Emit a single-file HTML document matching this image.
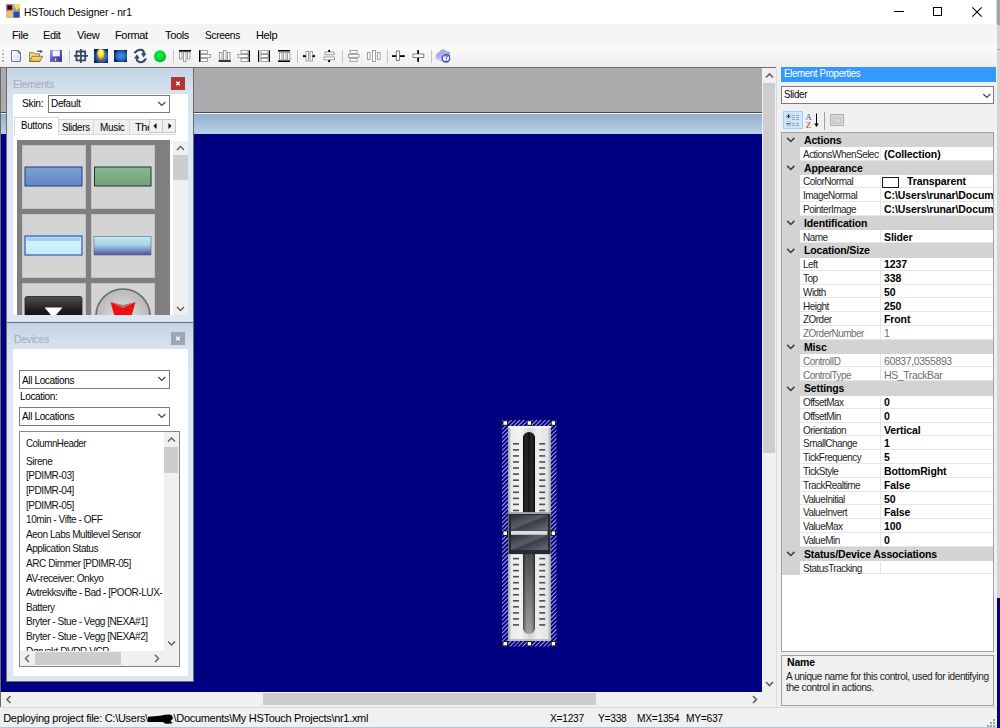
<!DOCTYPE html>
<html><head><meta charset="utf-8">
<style>
*{margin:0;padding:0;box-sizing:border-box}
html,body{width:1000px;height:728px;overflow:hidden;background:#f0f0f0;font-family:"Liberation Sans",sans-serif;font-size:11px;color:#000}
.a{position:absolute}
.t{position:absolute;white-space:nowrap;line-height:1.117}
svg{position:absolute;overflow:visible}
</style></head><body>
<div class="a" style="left:0px;top:0px;width:1000px;height:24px;background:#fff"></div>
<svg style="left:6px;top:4px" width="14" height="14" viewBox="0 0 14 14">
<rect x="0" y="0" width="14" height="14" fill="#b8b8b8"/>
<rect x="0.5" y="0.5" width="6" height="6" fill="#d04040"/><rect x="1.5" y="1.5" width="4.5" height="4" fill="#111"/>
<rect x="7.5" y="0.5" width="6" height="6" fill="#f0e050"/><path d="M7.5 0.5 L10 6.5 L7.5 6.5Z" fill="#7080ff"/><path d="M10 0.5 L13.5 0.5 L13.5 3 Z" fill="#f6f070"/><path d="M13.5 4 L13.5 6.5 L10 6.5Z" fill="#e06050"/>
<rect x="0.5" y="7.5" width="6" height="6" fill="#f0c070"/>
<rect x="7.5" y="7.5" width="6" height="6" fill="#2050a8"/>
</svg>
<div class="t" style="left:24.3px;top:6.06px;font-size:11.2px;transform:scaleX(0.92);transform-origin:0 0;letter-spacing:-0.1px;color:#000">HSTouch Designer - nr1</div>
<div class="a" style="left:894px;top:11px;width:10px;height:1px;background:#000"></div>
<div class="a" style="left:933px;top:7px;width:9px;height:9px;border:1px solid #000"></div>
<svg style="left:972px;top:7px" width="10" height="10" viewBox="0 0 10 10"><path d="M0.3 0.3L9.7 9.7M9.7 0.3L0.3 9.7" stroke="#000" stroke-width="1.1"/></svg>
<div class="a" style="left:997px;top:0px;width:3px;height:25px;background:#a4a4a4"></div>
<div class="a" style="left:997px;top:25px;width:3px;height:573px;background:#d4d4d4"></div>
<div class="a" style="left:997px;top:49px;width:3px;height:1px;background:#a8a8a8"></div>
<div class="a" style="left:997px;top:598px;width:3px;height:130px;background:#000080"></div>
<div class="a" style="left:996px;top:0px;width:1px;height:728px;background:#c4d6e8"></div>
<div class="a" style="left:0px;top:24px;width:997px;height:21px;background:#f5f5f5"></div>
<div class="t" style="left:12px;top:28.65px;font-size:11px;letter-spacing:-0.35px">File</div>
<div class="t" style="left:43px;top:28.65px;font-size:11px;letter-spacing:-0.35px">Edit</div>
<div class="t" style="left:77px;top:28.65px;font-size:11px;letter-spacing:-0.35px">View</div>
<div class="t" style="left:115px;top:28.65px;font-size:11px;letter-spacing:-0.35px">Format</div>
<div class="t" style="left:165px;top:28.65px;font-size:11px;letter-spacing:-0.35px">Tools</div>
<div class="t" style="left:205px;top:28.65px;font-size:11px;transform:scaleX(0.92);transform-origin:0 0;letter-spacing:-0.35px">Screens</div>
<div class="t" style="left:256px;top:28.65px;font-size:11px;letter-spacing:-0.35px">Help</div>
<div class="a" style="left:0px;top:45px;width:997px;height:22px;background:linear-gradient(#fbfbfb,#efefef)"></div>
<div class="a" style="left:2px;top:49.5px;width:2px;height:1.5px;background:#b4b4b4"></div>
<div class="a" style="left:2px;top:53px;width:2px;height:1.5px;background:#b4b4b4"></div>
<div class="a" style="left:2px;top:56.5px;width:2px;height:1.5px;background:#b4b4b4"></div>
<div class="a" style="left:2px;top:60px;width:2px;height:1.5px;background:#b4b4b4"></div>
<svg style="left:0;top:0" width="460" height="70" viewBox="0 0 460 70">
<defs>
<linearGradient id="gpage" x1="0" y1="0" x2="1" y2="1"><stop offset="0" stop-color="#fff"/><stop offset="1" stop-color="#cfd8ea"/></linearGradient>
<linearGradient id="gfold" x1="0" y1="0" x2="0" y2="1"><stop offset="0" stop-color="#f8e39a"/><stop offset="1" stop-color="#e6b43c"/></linearGradient>
<linearGradient id="gsave" x1="0" y1="0" x2="1" y2="1"><stop offset="0" stop-color="#9a9af0"/><stop offset="0.5" stop-color="#5a5ad0"/><stop offset="1" stop-color="#2a2a98"/></linearGradient>
<radialGradient id="gbulb" cx="0.5" cy="0.3" r="0.6"><stop offset="0" stop-color="#fff8e0"/><stop offset="0.35" stop-color="#fff040"/><stop offset="0.75" stop-color="#f0b020"/><stop offset="1" stop-color="#b06010"/></radialGradient>
<radialGradient id="gsq" cx="0.55" cy="0.5" r="0.6"><stop offset="0" stop-color="#4a94dc"/><stop offset="0.6" stop-color="#2a68b8"/><stop offset="1" stop-color="#061e60"/></radialGradient>
<linearGradient id="gblue" x1="0" y1="0" x2="1" y2="1"><stop offset="0" stop-color="#1a4c9c"/><stop offset="0.5" stop-color="#4c94d8"/><stop offset="1" stop-color="#1a4c9c"/></linearGradient>
<radialGradient id="ggreen" cx="0.45" cy="0.4" r="0.6"><stop offset="0" stop-color="#10f040"/><stop offset="0.8" stop-color="#00d030"/><stop offset="1" stop-color="#00a020"/></radialGradient>
<linearGradient id="gbook" x1="0" y1="0" x2="1" y2="1"><stop offset="0" stop-color="#9c9ce4"/><stop offset="0.5" stop-color="#b4b4f0"/><stop offset="1" stop-color="#7070c8"/></linearGradient>
</defs>
<!-- new doc -->
<path d="M11.5 50.5 H17.8 L20.5 53.2 V61.5 H11.5 Z" fill="url(#gpage)" stroke="#6a7a98" stroke-width="1"/>
<path d="M17.5 50.5 L20.5 53.5" stroke="#40506a" stroke-width="1.2"/>
<!-- open folder -->
<path d="M29.5 52.5 H33.5 L34.5 53.8 H39.5 V61.5 H29.5 Z" fill="#f0d880" stroke="#8a7030" stroke-width="0.8"/>
<path d="M29.8 61.5 L32.3 56.3 H42.7 L39.8 61.5 Z" fill="url(#gfold)" stroke="#7a5a18" stroke-width="0.8"/>
<path d="M37.2 51.2 H40.5" stroke="#34507a" stroke-width="1.3"/><path d="M40.3 49.8 L43 51.6 L40.3 53.2Z" fill="#34507a"/>
<!-- save -->
<rect x="50" y="50" width="12" height="11.8" fill="url(#gsave)"/>
<rect x="52.6" y="50.5" width="7.2" height="5.8" fill="#f2f4ff"/>
<rect x="54" y="57.8" width="4.8" height="3.7" fill="#50506a"/><rect x="54.8" y="58.5" width="1.4" height="2.5" fill="#d8d8e8"/>
<!-- separator -->
<rect x="69" y="50" width="1" height="13" fill="#c4c4c4"/>
<!-- grid -->
<path d="M76.5 51.5 H85.2 V60.3 H76.5 Z M80.85 49 V63 M74 55.9 H88" stroke="#33476a" stroke-width="1.8" fill="none"/>
<!-- bulb -->
<rect x="94" y="49" width="14" height="14" fill="url(#gsq)"/>
<path d="M100.8 49 C104.5 49.3 105 52.5 104.5 55 C104 57.3 102.5 58.5 102 61 H99.6 C99.2 58.5 97.7 57.3 97.2 55 C96.7 52.5 97.2 49.3 100.8 49Z" fill="url(#gbulb)"/>
<rect x="99.8" y="60.5" width="2" height="2.2" fill="#6a5020"/>
<!-- blue square -->
<rect x="114" y="50" width="13" height="12" fill="url(#gsq)"/>
<!-- refresh -->
<path d="M134.5 53.2 Q137 49.6 141 49.8 Q144 50.2 143.9 53.8" fill="none" stroke="#34486a" stroke-width="2.1"/>
<path d="M141 53.2 L146.5 53.2 L143.6 57.5Z" fill="#34486a"/>
<path d="M146 58.5 Q144 62.4 140 62.2 Q136.5 61.8 136.8 58.2" fill="none" stroke="#34486a" stroke-width="2.1"/>
<path d="M134.1 58.6 L139.7 58.6 L136.9 54.2Z" fill="#34486a"/>
<!-- green -->
<circle cx="160" cy="56.3" r="6" fill="url(#ggreen)"/>
<rect x="173" y="50" width="1" height="13" fill="#c4c4c4"/>
<g fill="#fff" stroke="#8a8a8a" stroke-width="0.8">
<!-- align top -->
<rect x="179.5" y="52" width="2.5" height="7"/><rect x="183.5" y="52" width="2.5" height="9.5"/><rect x="187.5" y="52" width="2.5" height="7"/>
<!-- align left -->
<rect x="200.5" y="50.5" width="7" height="2.8"/><rect x="200.5" y="54.5" width="10" height="3"/><rect x="200.5" y="58.5" width="7" height="3"/>
<!-- align bottom -->
<rect x="219.5" y="52.5" width="2.5" height="7.5"/><rect x="223.5" y="50.5" width="2.5" height="9.5"/><rect x="227.5" y="52.5" width="2.5" height="7.5"/>
<!-- align right -->
<rect x="241" y="50.5" width="7" height="2.8"/><rect x="238" y="54.5" width="10" height="3"/><rect x="241" y="58.5" width="7" height="3"/>
<!-- same width -->
<rect x="261" y="50.5" width="7" height="2.8"/><rect x="261" y="54.5" width="7" height="3"/><rect x="261" y="58.5" width="7" height="3"/>
<!-- same height -->
<rect x="279.5" y="52.5" width="2.5" height="7.5"/><rect x="283.5" y="52.5" width="2.5" height="7.5"/><rect x="287.5" y="52.5" width="2.5" height="7.5"/>
</g>
<g fill="#000">
<rect x="179" y="50" width="12" height="1.6"/>
<rect x="199" y="50.3" width="1.3" height="11.7"/>
<rect x="218.6" y="60.3" width="12.2" height="1.5"/>
<rect x="248.7" y="50.3" width="1.3" height="11.7"/>
<rect x="258" y="50.3" width="1.2" height="11.7"/><rect x="268.8" y="50.3" width="1.2" height="11.7"/>
<rect x="278" y="50" width="12" height="1.5"/><rect x="278" y="60.5" width="12" height="1.5"/>
</g>
<rect x="297" y="50" width="1" height="13" fill="#c4c4c4"/>
<!-- hspace -->
<g fill="#fff" stroke="#8a8a8a" stroke-width="0.8"><rect x="306" y="51.5" width="2.5" height="9.5"/><rect x="310" y="51.5" width="2.5" height="9.5"/>
<rect x="325" y="52" width="9" height="2.8"/><rect x="324" y="57" width="10.5" height="2.8"/>
<rect x="350" y="50.5" width="7" height="3"/><rect x="348.5" y="54.3" width="10.5" height="3"/><rect x="350" y="58.3" width="7" height="3"/>
<rect x="367.5" y="52.5" width="2.5" height="7"/><rect x="372.5" y="50.5" width="3" height="11"/><rect x="377.5" y="52.5" width="2.5" height="7"/>
</g>
<g fill="#000"><rect x="303" y="55.5" width="3" height="1.5"/><rect x="312.5" y="55.5" width="2.5" height="1.5"/><circle cx="304" cy="56.2" r="1.1"/><circle cx="314" cy="56.2" r="1.1"/>
<rect x="328.5" y="50" width="1.5" height="2"/><rect x="328.5" y="60" width="1.5" height="2"/><circle cx="329.2" cy="50.7" r="1"/><circle cx="329.2" cy="61.3" r="1"/>
</g>
<rect x="342" y="50" width="1" height="13" fill="#c4c4c4"/>
<rect x="387" y="50" width="1" height="13" fill="#c4c4c4"/>
<!-- center h -->
<rect x="392" y="55.2" width="12.8" height="1.8" fill="#000"/>
<rect x="396.3" y="51" width="3.2" height="9.5" fill="#fff" stroke="#666" stroke-width="0.8"/>
<rect x="417.2" y="50.2" width="1.8" height="11.6" fill="#000"/>
<rect x="413" y="54" width="10.8" height="3.5" fill="#fff" stroke="#666" stroke-width="0.8"/>
<rect x="431" y="50" width="1" height="13" fill="#c4c4c4"/>
<!-- help book -->
<path d="M436 54.5 L442.5 49 L450 52.3 L450 57 L444 62 L436 59 Z" fill="url(#gbook)"/>
<path d="M437 57.8 L442.5 60" stroke="#e0e0ff" stroke-width="0.9"/>
<circle cx="446" cy="58.3" r="3.7" fill="#f4f8ff" stroke="#2850d0" stroke-width="1.3"/>
<path d="M444.8 56.8 Q445.2 55.4 446.4 55.5 Q447.6 55.8 447.2 57 Q446.4 57.8 446.2 59" fill="none" stroke="#404070" stroke-width="1"/><rect x="445.7" y="60" width="1" height="1" fill="#404070"/>
</svg>
<div class="a" style="left:0px;top:67px;width:778px;height:1px;background:#6a6a6a"></div>
<div class="a" style="left:0px;top:68px;width:762px;height:44px;background:#ababab"></div>
<div class="a" style="left:0px;top:112px;width:762px;height:1px;background:#4a4a4a"></div>
<div class="a" style="left:0px;top:113px;width:762px;height:1px;background:#f4f8fc"></div>
<div class="a" style="left:0px;top:114px;width:762px;height:20px;background:linear-gradient(#93afce,#b9d1e9)"></div>
<div class="a" style="left:0px;top:134px;width:762px;height:558px;background:#000080"></div>
<div class="a" style="left:0px;top:67px;width:1px;height:640px;background:#6a6a6a"></div>
<div class="a" style="left:762px;top:68px;width:15px;height:639px;background:#f0f0f0"></div>
<div class="a" style="left:763px;top:83px;width:12px;height:370px;background:#cdcdcd"></div>
<svg style="left:762px;top:68px" width="15" height="15"><path d="M4 9.5 L7.5 6 L11 9.5" fill="none" stroke="#606060" stroke-width="1.6"/></svg>
<svg style="left:762px;top:676px" width="15" height="15"><path d="M4 6 L7.5 9.5 L11 6" fill="none" stroke="#606060" stroke-width="1.6"/></svg>
<div class="a" style="left:1px;top:692px;width:761px;height:15px;background:#f0f0f0"></div>
<div class="a" style="left:263px;top:693px;width:333px;height:12px;background:#cdcdcd"></div>
<svg style="left:1px;top:692px" width="15" height="15"><path d="M9.5 4 L6 7.5 L9.5 11" fill="none" stroke="#606060" stroke-width="1.6"/></svg>
<svg style="left:747px;top:692px" width="15" height="15"><path d="M6 4 L9.5 7.5 L6 11" fill="none" stroke="#606060" stroke-width="1.6"/></svg>
<div class="a" style="left:776px;top:67px;width:1px;height:640px;background:#dcdcdc"></div>
<svg style="left:500px;top:418px" width="60" height="232" viewBox="0 0 60 232">
<defs>
<pattern id="hatch" width="3" height="3" patternUnits="userSpaceOnUse" patternTransform="rotate(45)"><rect width="3" height="3" fill="#000080"/><rect x="0" y="0" width="0.9" height="3" fill="#b8b8ec"/></pattern>
<linearGradient id="silver" x1="0" y1="0" x2="1" y2="0"><stop offset="0" stop-color="#9aa0a6"/><stop offset="0.08" stop-color="#e8eaec"/><stop offset="0.3" stop-color="#f2f3f4"/><stop offset="0.5" stop-color="#d4d6d8"/><stop offset="0.7" stop-color="#eceeef"/><stop offset="0.92" stop-color="#e2e4e6"/><stop offset="1" stop-color="#9ca2a8"/></linearGradient>
<linearGradient id="trk" x1="0" y1="0" x2="0" y2="1"><stop offset="0" stop-color="#000"/><stop offset="0.4" stop-color="#0a0a0a"/><stop offset="0.6" stop-color="#383838"/><stop offset="1" stop-color="#9a9a9a"/></linearGradient>
<linearGradient id="trkh" x1="0" y1="0" x2="1" y2="0"><stop offset="0" stop-color="#000" stop-opacity="0.5"/><stop offset="0.5" stop-color="#fff" stop-opacity="0.05"/><stop offset="1" stop-color="#000" stop-opacity="0.5"/></linearGradient>
<linearGradient id="thumb" x1="0" y1="0" x2="1" y2="1"><stop offset="0" stop-color="#2a2e38"/><stop offset="0.45" stop-color="#5a5e68"/><stop offset="0.55" stop-color="#3a3e48"/><stop offset="1" stop-color="#6a6e78"/></linearGradient>
</defs>
<rect x="2" y="2" width="54.5" height="226.5" fill="url(#hatch)"/>
<rect x="8" y="8" width="43" height="215" fill="url(#silver)"/>
<rect x="8" y="8" width="43" height="2" fill="#f8f8f8" opacity="0.8"/>
<rect x="8" y="221" width="43" height="2" fill="#b0b4b8" opacity="0.8"/>
<rect x="23" y="14" width="12" height="202" rx="6" ry="6" fill="url(#trk)"/>
<rect x="23" y="14" width="12" height="202" rx="6" ry="6" fill="url(#trkh)"/>
<g fill="#4e4e4e"><rect x="13" y="25.00" width="6" height="1.6"/><rect x="39.2" y="25.00" width="6" height="1.6"/><rect x="13" y="31.06" width="6" height="1.6"/><rect x="39.2" y="31.06" width="6" height="1.6"/><rect x="13" y="37.12" width="6" height="1.6"/><rect x="39.2" y="37.12" width="6" height="1.6"/><rect x="13" y="43.18" width="6" height="1.6"/><rect x="39.2" y="43.18" width="6" height="1.6"/><rect x="13" y="49.24" width="6" height="1.6"/><rect x="39.2" y="49.24" width="6" height="1.6"/><rect x="13" y="55.30" width="6" height="1.6"/><rect x="39.2" y="55.30" width="6" height="1.6"/><rect x="13" y="61.36" width="6" height="1.6"/><rect x="39.2" y="61.36" width="6" height="1.6"/><rect x="13" y="67.42" width="6" height="1.6"/><rect x="39.2" y="67.42" width="6" height="1.6"/><rect x="13" y="73.48" width="6" height="1.6"/><rect x="39.2" y="73.48" width="6" height="1.6"/><rect x="13" y="79.54" width="6" height="1.6"/><rect x="39.2" y="79.54" width="6" height="1.6"/><rect x="13" y="85.60" width="6" height="1.6"/><rect x="39.2" y="85.60" width="6" height="1.6"/><rect x="13" y="91.66" width="6" height="1.6"/><rect x="39.2" y="91.66" width="6" height="1.6"/><rect x="13" y="139.80" width="6" height="1.6"/><rect x="39.2" y="139.80" width="6" height="1.6"/><rect x="13" y="145.83" width="6" height="1.6"/><rect x="39.2" y="145.83" width="6" height="1.6"/><rect x="13" y="151.86" width="6" height="1.6"/><rect x="39.2" y="151.86" width="6" height="1.6"/><rect x="13" y="157.89" width="6" height="1.6"/><rect x="39.2" y="157.89" width="6" height="1.6"/><rect x="13" y="163.92" width="6" height="1.6"/><rect x="39.2" y="163.92" width="6" height="1.6"/><rect x="13" y="169.95" width="6" height="1.6"/><rect x="39.2" y="169.95" width="6" height="1.6"/><rect x="13" y="175.98" width="6" height="1.6"/><rect x="39.2" y="175.98" width="6" height="1.6"/><rect x="13" y="182.01" width="6" height="1.6"/><rect x="39.2" y="182.01" width="6" height="1.6"/><rect x="13" y="188.04" width="6" height="1.6"/><rect x="39.2" y="188.04" width="6" height="1.6"/><rect x="13" y="194.07" width="6" height="1.6"/><rect x="39.2" y="194.07" width="6" height="1.6"/><rect x="13" y="200.10" width="6" height="1.6"/><rect x="39.2" y="200.10" width="6" height="1.6"/><rect x="13" y="206.13" width="6" height="1.6"/><rect x="39.2" y="206.13" width="6" height="1.6"/></g>
<rect x="8.5" y="94.3" width="42" height="41.8" fill="#262a34"/>
<rect x="11" y="97" width="37" height="15" fill="url(#thumb)"/>
<rect x="11" y="117" width="37" height="15" fill="url(#thumb)"/>
<rect x="11" y="112.8" width="36.5" height="4" fill="#dcdcdc"/>
<rect x="8.5" y="94.3" width="42" height="1.5" fill="#c8c8cc"/>
<g fill="#fff" stroke="#000" stroke-width="0.8">
<rect x="3" y="2.8" width="4.4" height="4.4"/><rect x="27.2" y="2.8" width="4.4" height="4.4"/><rect x="51.2" y="2.8" width="4.4" height="4.4"/>
<rect x="3" y="113" width="4.4" height="4.4"/><rect x="51.2" y="113" width="4.4" height="4.4"/>
<rect x="3" y="223.5" width="4.4" height="4.4"/><rect x="27.2" y="223.5" width="4.4" height="4.4"/><rect x="51.2" y="223.5" width="4.4" height="4.4"/>
</g>
</svg>
<div class="a" style="left:6px;top:67px;width:188px;height:256px;background:linear-gradient(#c4d4e4 0px,#d6e2ee 24px,#dce7f2 60px);border:1px solid #6e6e6e"></div>
<div class="t" style="left:13px;top:77.84px;font-size:11px;transform:scaleX(0.93);transform-origin:0 0;color:#a3abb4;letter-spacing:-0.2px">Elements</div>
<div class="a" style="left:171px;top:77px;width:14px;height:13px;background:#b23434"></div>
<svg style="left:171px;top:77px" width="14" height="13"><path d="M5.2 4.7 L8.8 8.3 M8.8 4.7 L5.2 8.3" stroke="#fff" stroke-width="1.3"/></svg>
<div class="a" style="left:13px;top:94px;width:175px;height:221px;background:#fff"></div>
<div class="t" style="left:22px;top:97.05px;font-size:11px;transform:scaleX(0.93);transform-origin:0 0;letter-spacing:-0.3px">Skin:</div>
<div class="a" style="left:48px;top:95px;width:122px;height:18px;background:#fff;border:1px solid #7a7a7a"></div>
<div class="t" style="left:51.2px;top:97.05px;font-size:11px;transform:scaleX(0.9);transform-origin:0 0;letter-spacing:-0.3px">Default</div>
<svg style="left:156px;top:99px" width="12" height="10"><path d="M2.3 3 L5.8 6.5 L9.3 3" fill="none" stroke="#444" stroke-width="1.2"/></svg>
<div class="a" style="left:58px;top:119px;width:36px;height:16px;background:#f0f0f0;border:1px solid #d9d9d9;border-bottom:none"></div>
<div class="a" style="left:93px;top:119px;width:37px;height:16px;background:#f0f0f0;border:1px solid #d9d9d9;border-bottom:none"></div>
<div class="a" style="left:129px;top:119px;width:22px;height:16px;background:#f0f0f0;border:1px solid #d9d9d9;border-bottom:none"></div>
<div class="a" style="left:14px;top:134px;width:162px;height:1px;background:#d9d9d9"></div>
<div class="a" style="left:14px;top:117px;width:45px;height:19px;background:#fff;border:1px solid #d9d9d9;border-bottom:none"></div>
<div class="t" style="left:21px;top:119.35px;font-size:11px;transform:scaleX(0.88);transform-origin:0 0;letter-spacing:-0.3px">Buttons</div>
<div class="t" style="left:62px;top:120.85px;font-size:11px;transform:scaleX(0.88);transform-origin:0 0;letter-spacing:-0.3px">Sliders</div>
<div class="t" style="left:99.5px;top:120.85px;font-size:11px;transform:scaleX(0.9);transform-origin:0 0;letter-spacing:-0.3px">Music</div>
<div class="a" style="left:130px;top:119px;width:19px;height:15px;overflow:hidden"><div class="t" style="left:5px;top:1.5px;font-size:11px;letter-spacing:-0.45px">Theme</div></div>
<div class="a" style="left:149px;top:119px;width:14px;height:14px;background:#f0f0f0;border:1px solid #c8c8c8"></div>
<div class="a" style="left:162px;top:119px;width:14px;height:14px;background:#f0f0f0;border:1px solid #c8c8c8"></div>
<svg style="left:149px;top:119px" width="28" height="14"><path d="M7.5 4 L4.5 7 L7.5 10Z M19.5 4 L22.5 7 L19.5 10Z" fill="#000"/></svg>
<div class="a" style="left:17px;top:140px;width:153px;height:175px;background:#7f7f7f;overflow:hidden">
<div class="a" style="left:5px;top:5px;width:64px;height:64px;background:#d4d4d4;border:1px solid #c4c4c4"></div>
<div class="a" style="left:74px;top:5px;width:64px;height:64px;background:#d4d4d4;border:1px solid #c4c4c4"></div>
<div class="a" style="left:5px;top:74px;width:64px;height:64px;background:#d4d4d4;border:1px solid #c4c4c4"></div>
<div class="a" style="left:74px;top:74px;width:64px;height:64px;background:#d4d4d4;border:1px solid #c4c4c4"></div>
<div class="a" style="left:5px;top:143px;width:64px;height:64px;background:#d4d4d4;border:1px solid #c4c4c4"></div>
<div class="a" style="left:74px;top:143px;width:64px;height:64px;background:#d4d4d4;border:1px solid #c4c4c4"></div>
</div>
<svg style="left:17px;top:140px;overflow:hidden" width="153" height="175" viewBox="17 140 153 175">
<defs>
<linearGradient id="b1" x1="0" y1="0" x2="0" y2="1"><stop offset="0" stop-color="#7aa2d4"/><stop offset="1" stop-color="#6088c0"/></linearGradient>
<linearGradient id="b2" x1="0" y1="0" x2="0" y2="1"><stop offset="0" stop-color="#88b894"/><stop offset="1" stop-color="#70a07c"/></linearGradient>
<linearGradient id="b3" x1="0" y1="0" x2="0" y2="1"><stop offset="0" stop-color="#a8d8f4"/><stop offset="0.3" stop-color="#d0f2fc"/><stop offset="1" stop-color="#c4ecfa"/></linearGradient>
<linearGradient id="b4" x1="0" y1="0" x2="0" y2="1"><stop offset="0" stop-color="#bcecf0"/><stop offset="0.45" stop-color="#a8d4ea"/><stop offset="1" stop-color="#4c50a0"/></linearGradient>
<linearGradient id="b5" x1="0" y1="0" x2="0" y2="1"><stop offset="0" stop-color="#505050"/><stop offset="0.5" stop-color="#1a1a1a"/><stop offset="1" stop-color="#000"/></linearGradient>
<radialGradient id="b6" cx="0.5" cy="0.5" r="0.5"><stop offset="0" stop-color="#e4e4e4"/><stop offset="1" stop-color="#b8b8b8"/></radialGradient>
</defs>
<rect x="25" y="167" width="57" height="19" fill="url(#b1)" stroke="#1a3a8e" stroke-width="1"/>
<rect x="94.5" y="167" width="56.5" height="19" fill="url(#b2)" stroke="#1c3a28" stroke-width="1"/>
<rect x="25" y="236" width="57" height="19" fill="url(#b3)" stroke="#2a58bc" stroke-width="1.2"/>
<rect x="27" y="238" width="53" height="3" fill="#8ec0e8" opacity="0.6"/>
<rect x="94" y="236.5" width="57" height="18.5" fill="url(#b4)" stroke="#6a5a90" stroke-width="0.6"/>
<rect x="25" y="296.5" width="57" height="30" rx="2" fill="url(#b5)" stroke="#222" stroke-width="0.8"/>
<path d="M44.5 307.5 L62.5 307.5 L53.5 318Z" fill="#fff"/>
<circle cx="123" cy="316" r="27" fill="url(#b6)" stroke="#6a6a6a" stroke-width="1.6"/>
<path d="M110.5 302 L123 308 L135.5 302 L131 318 L115 318Z" fill="#ee1010"/><path d="M110.5 302 L123 308 L135.5 302 L123 305Z" fill="#a01010" opacity="0.5"/>
</svg>
<div class="a" style="left:173px;top:141px;width:15px;height:174px;background:#f0f0f0"></div>
<div class="a" style="left:173px;top:155px;width:15px;height:25px;background:#cdcdcd"></div>
<svg style="left:173px;top:141px" width="15" height="15"><path d="M4 9 L7.5 5.5 L11 9" fill="none" stroke="#606060" stroke-width="1.4"/></svg>
<svg style="left:173px;top:301px" width="15" height="15"><path d="M4 6 L7.5 9.5 L11 6" fill="none" stroke="#606060" stroke-width="1.4"/></svg>
<div class="a" style="left:6px;top:322px;width:188px;height:360px;background:linear-gradient(#c4d4e4 0px,#d6e2ee 24px,#dce7f2 60px);border:1px solid #6e6e6e"></div>
<div class="t" style="left:13.5px;top:332.65px;font-size:11px;transform:scaleX(0.93);transform-origin:0 0;color:#a3abb4;letter-spacing:-0.2px">Devices</div>
<div class="a" style="left:171px;top:332px;width:14px;height:13px;background:#9ca7b2"></div>
<svg style="left:171px;top:332px" width="14" height="13"><path d="M5.2 4.7 L8.8 8.3 M8.8 4.7 L5.2 8.3" stroke="#fff" stroke-width="1.3"/></svg>
<div class="a" style="left:13px;top:349px;width:175px;height:327px;background:#fff"></div>
<div class="a" style="left:19px;top:370px;width:151px;height:19px;background:#fff;border:1px solid #7a7a7a"></div>
<div class="t" style="left:21.5px;top:373.65px;font-size:11px;transform:scaleX(0.91);transform-origin:0 0;letter-spacing:-0.4px">All Locations</div>
<svg style="left:156px;top:374px" width="12" height="10"><path d="M2.3 3 L5.8 6.5 L9.3 3" fill="none" stroke="#444" stroke-width="1.2"/></svg>
<div class="t" style="left:19.5px;top:390.44px;font-size:11px;transform:scaleX(0.91);transform-origin:0 0;letter-spacing:-0.4px">Location:</div>
<div class="a" style="left:19px;top:407px;width:151px;height:19px;background:#fff;border:1px solid #7a7a7a"></div>
<div class="t" style="left:21.5px;top:410.35px;font-size:11px;transform:scaleX(0.91);transform-origin:0 0;letter-spacing:-0.4px">All Locations</div>
<svg style="left:156px;top:411px" width="12" height="10"><path d="M2.3 3 L5.8 6.5 L9.3 3" fill="none" stroke="#444" stroke-width="1.2"/></svg>
<div class="a" style="left:19px;top:431px;width:161px;height:236px;background:#fff;border:1px solid #828790"></div>
<div class="a" style="left:20px;top:432px;width:144px;height:219px;overflow:hidden">
<div class="t" style="left:6.00px;top:5.70px;font-size:10.5px;letter-spacing:-0.5px;color:#111;transform:scaleX(0.93);transform-origin:0 0">ColumnHeader</div>
<div class="t" style="left:6.00px;top:23.80px;font-size:10.5px;letter-spacing:-0.5px;color:#111;transform:scaleX(0.96);transform-origin:0 0">Sirene</div>
<div class="t" style="left:6.00px;top:38.40px;font-size:10.5px;letter-spacing:-0.5px;color:#111;transform:scaleX(0.96);transform-origin:0 0">[PDIMR-03]</div>
<div class="t" style="left:6.00px;top:53.00px;font-size:10.5px;letter-spacing:-0.5px;color:#111;transform:scaleX(0.96);transform-origin:0 0">[PDIMR-04]</div>
<div class="t" style="left:6.00px;top:67.60px;font-size:10.5px;letter-spacing:-0.5px;color:#111;transform:scaleX(0.96);transform-origin:0 0">[PDIMR-05]</div>
<div class="t" style="left:6.00px;top:82.20px;font-size:10.5px;letter-spacing:-0.5px;color:#111;transform:scaleX(0.96);transform-origin:0 0">10min - Vifte - OFF</div>
<div class="t" style="left:6.00px;top:96.80px;font-size:10.5px;letter-spacing:-0.5px;color:#111;transform:scaleX(0.96);transform-origin:0 0">Aeon Labs Multilevel Sensor</div>
<div class="t" style="left:6.00px;top:111.40px;font-size:10.5px;letter-spacing:-0.5px;color:#111;transform:scaleX(0.96);transform-origin:0 0">Application Status</div>
<div class="t" style="left:6.00px;top:126.00px;font-size:10.5px;letter-spacing:-0.5px;color:#111;transform:scaleX(0.96);transform-origin:0 0">ARC Dimmer [PDIMR-05]</div>
<div class="t" style="left:6.00px;top:140.60px;font-size:10.5px;letter-spacing:-0.5px;color:#111;transform:scaleX(0.96);transform-origin:0 0">AV-receiver: Onkyo</div>
<div class="t" style="left:6.00px;top:155.20px;font-size:10.5px;letter-spacing:-0.5px;color:#111;transform:scaleX(0.96);transform-origin:0 0">Avtrekksvifte - Bad - [POOR-LUX-</div>
<div class="t" style="left:6.00px;top:169.80px;font-size:10.5px;letter-spacing:-0.5px;color:#111;transform:scaleX(0.96);transform-origin:0 0">Battery</div>
<div class="t" style="left:6.00px;top:184.40px;font-size:10.5px;letter-spacing:-0.5px;color:#111;transform:scaleX(0.96);transform-origin:0 0">Bryter - Stue - Vegg [NEXA#1]</div>
<div class="t" style="left:6.00px;top:199.00px;font-size:10.5px;letter-spacing:-0.5px;color:#111;transform:scaleX(0.96);transform-origin:0 0">Bryter - Stue - Vegg [NEXA#2]</div>
<div class="t" style="left:6.00px;top:213.60px;font-size:10.5px;letter-spacing:-0.5px;color:#111;transform:scaleX(0.96);transform-origin:0 0">Dørvakt DVDR VCR</div>
</div>
<div class="a" style="left:164px;top:432px;width:15px;height:219px;background:#f0f0f0"></div>
<div class="a" style="left:164px;top:447px;width:14px;height:26px;background:#cdcdcd"></div>
<svg style="left:164px;top:433px" width="15" height="14"><path d="M4 8.5 L7.5 5 L11 8.5" fill="none" stroke="#606060" stroke-width="1.4"/></svg>
<svg style="left:164px;top:636px" width="15" height="14"><path d="M4 5.5 L7.5 9 L11 5.5" fill="none" stroke="#606060" stroke-width="1.4"/></svg>
<div class="a" style="left:20px;top:651px;width:159px;height:15px;background:#f0f0f0"></div>
<div class="a" style="left:35px;top:652px;width:86px;height:13px;background:#cdcdcd"></div>
<svg style="left:20px;top:651px" width="15" height="15"><path d="M9 4 L5.5 7.5 L9 11" fill="none" stroke="#606060" stroke-width="1.4"/></svg>
<svg style="left:149px;top:651px" width="15" height="15"><path d="M6 4 L9.5 7.5 L6 11" fill="none" stroke="#606060" stroke-width="1.4"/></svg>
<div class="a" style="left:777px;top:67px;width:220px;height:640px;background:#f0f0f0"></div>
<div class="a" style="left:781px;top:67px;width:215px;height:15px;background:#3399ff"></div>
<div class="t" style="left:784.3px;top:68.00px;font-size:10.5px;transform:scaleX(0.92);transform-origin:0 0;color:#fff;letter-spacing:-0.35px">Element Properties</div>
<div class="a" style="left:781px;top:86px;width:213px;height:18px;background:#fff;border:1px solid #7a7a7a"></div>
<div class="t" style="left:784.3px;top:88.25px;font-size:11px;transform:scaleX(0.88);transform-origin:0 0;letter-spacing:-0.3px">Slider</div>
<svg style="left:981px;top:91px" width="12" height="10"><path d="M2.3 3 L5.8 6.5 L9.3 3" fill="none" stroke="#444" stroke-width="1.2"/></svg>
<div class="a" style="left:783px;top:111px;width:20px;height:18px;background:#cce8ff;border:1px solid #99d1ff"></div>
<svg style="left:783px;top:111px" width="70" height="20" viewBox="783 111 70 20">
<circle cx="788.5" cy="116.3" r="2.3" fill="#fff" stroke="#7a9ab8" stroke-width="0.7"/><path d="M787 116.3 H790 M788.5 114.8 V117.8" stroke="#000" stroke-width="0.9"/>
<circle cx="788.5" cy="123.8" r="2.3" fill="#fff" stroke="#7a9ab8" stroke-width="0.7"/><path d="M787 123.8 H790" stroke="#000" stroke-width="0.9"/>
<path d="M792 115.5 H795 M796 115.5 H799 M792 117.5 H795 M796 117.5 H799 M792 119.5 H795 M796 119.5 H799 M792 123.5 H795 M796 123.5 H799 M792 125.5 H795 M796 125.5 H799" stroke="#8aa0b0" stroke-width="0.9"/>
<text x="805.5" y="120" font-family="Liberation Serif" font-size="8.5" fill="#3050b8">A</text>
<text x="806" y="127.5" font-family="Liberation Serif" font-size="8.5" fill="#b03030">Z</text>
<path d="M816.5 113.5 V126" stroke="#000" stroke-width="1"/><path d="M814.3 123.5 L816.5 127 L818.7 123.5Z" fill="#000"/>
<rect x="824" y="112" width="1" height="18" fill="#a0a0a0"/>
<rect x="830.5" y="114.5" width="13" height="11" fill="#d8d8d8" stroke="#b0b0b0" stroke-width="1"/>
<rect x="833" y="118" width="8" height="5" fill="none" stroke="#b8b8b8" stroke-width="0.8"/>
</svg>
<div class="a" style="left:781px;top:132px;width:213px;height:520px;background:#fff;border:1px solid #a0a0a0"></div>
<div class="a" style="left:782px;top:133px;width:211px;height:518px;overflow:hidden">
<div class="a" style="left:0.00px;top:0.00px;width:211.00px;height:14.29px;background:#d3d3d3"></div>
<svg style="left:4px;top:4.30px" width="10" height="6"><path d="M1.2 0.9 L4.8 4.5 L8.4 0.9" fill="none" stroke="#3c3c3c" stroke-width="1.5"/></svg>
<div class="t" style="left:22.00px;top:2.10px;font-size:10.5px;font-weight:bold;letter-spacing:-0.15px">Actions</div>
<div class="a" style="left:0.00px;top:13.79px;width:18.00px;height:14.29px;background:#d3d3d3"></div>
<div class="a" style="left:18.00px;top:26.58px;width:193.00px;height:1.00px;background:#e6e6e6"></div>
<div class="a" style="left:98.00px;top:13.79px;width:1.00px;height:13.79px;background:#e6e6e6"></div>
<div class="a" style="left:21px;top:13.79px;width:76px;height:13.79px;overflow:hidden"><div class="t" style="left:0;top:2.10px;font-size:10.5px;letter-spacing:-0.55px;transform:scaleX(0.95);transform-origin:0 0;color:#1e1e1e">ActionsWhenSelected</div></div>
<div class="t" style="left:102.00px;top:15.89px;font-size:10.5px;font-weight:bold;letter-spacing:-0.1px">(Collection)</div>
<div class="a" style="left:0.00px;top:27.58px;width:211.00px;height:14.29px;background:#d3d3d3"></div>
<svg style="left:4px;top:31.88px" width="10" height="6"><path d="M1.2 0.9 L4.8 4.5 L8.4 0.9" fill="none" stroke="#3c3c3c" stroke-width="1.5"/></svg>
<div class="t" style="left:22.00px;top:29.68px;font-size:10.5px;font-weight:bold;letter-spacing:-0.15px">Appearance</div>
<div class="a" style="left:0.00px;top:41.37px;width:18.00px;height:14.29px;background:#d3d3d3"></div>
<div class="a" style="left:18.00px;top:54.16px;width:193.00px;height:1.00px;background:#e6e6e6"></div>
<div class="a" style="left:98.00px;top:41.37px;width:1.00px;height:13.79px;background:#e6e6e6"></div>
<div class="a" style="left:21px;top:41.37px;width:76px;height:13.79px;overflow:hidden"><div class="t" style="left:0;top:2.10px;font-size:10.5px;letter-spacing:-0.55px;transform:scaleX(0.95);transform-origin:0 0;color:#1e1e1e">ColorNormal</div></div>
<div class="a" style="left:100.00px;top:43.67px;width:17.00px;height:11.00px;background:#fff;border:1px solid #1a1a1a"></div>
<div class="t" style="left:125.00px;top:43.47px;font-size:10.5px;font-weight:bold;letter-spacing:-0.1px">Transparent</div>
<div class="a" style="left:0.00px;top:55.16px;width:18.00px;height:14.29px;background:#d3d3d3"></div>
<div class="a" style="left:18.00px;top:67.95px;width:193.00px;height:1.00px;background:#e6e6e6"></div>
<div class="a" style="left:98.00px;top:55.16px;width:1.00px;height:13.79px;background:#e6e6e6"></div>
<div class="a" style="left:21px;top:55.16px;width:76px;height:13.79px;overflow:hidden"><div class="t" style="left:0;top:2.10px;font-size:10.5px;letter-spacing:-0.55px;transform:scaleX(0.95);transform-origin:0 0;color:#1e1e1e">ImageNormal</div></div>
<div class="t" style="left:102.00px;top:57.26px;font-size:10.5px;font-weight:bold;letter-spacing:-0.1px">C:\Users\runar\Documents\My HSTouch</div>
<div class="a" style="left:0.00px;top:68.95px;width:18.00px;height:14.29px;background:#d3d3d3"></div>
<div class="a" style="left:18.00px;top:81.74px;width:193.00px;height:1.00px;background:#e6e6e6"></div>
<div class="a" style="left:98.00px;top:68.95px;width:1.00px;height:13.79px;background:#e6e6e6"></div>
<div class="a" style="left:21px;top:68.95px;width:76px;height:13.79px;overflow:hidden"><div class="t" style="left:0;top:2.10px;font-size:10.5px;letter-spacing:-0.55px;transform:scaleX(0.95);transform-origin:0 0;color:#1e1e1e">PointerImage</div></div>
<div class="t" style="left:102.00px;top:71.05px;font-size:10.5px;font-weight:bold;letter-spacing:-0.1px">C:\Users\runar\Documents\My HSTouch</div>
<div class="a" style="left:0.00px;top:82.74px;width:211.00px;height:14.29px;background:#d3d3d3"></div>
<svg style="left:4px;top:87.04px" width="10" height="6"><path d="M1.2 0.9 L4.8 4.5 L8.4 0.9" fill="none" stroke="#3c3c3c" stroke-width="1.5"/></svg>
<div class="t" style="left:22.00px;top:84.84px;font-size:10.5px;font-weight:bold;letter-spacing:-0.15px">Identification</div>
<div class="a" style="left:0.00px;top:96.53px;width:18.00px;height:14.29px;background:#d3d3d3"></div>
<div class="a" style="left:18.00px;top:109.32px;width:193.00px;height:1.00px;background:#e6e6e6"></div>
<div class="a" style="left:98.00px;top:96.53px;width:1.00px;height:13.79px;background:#e6e6e6"></div>
<div class="a" style="left:21px;top:96.53px;width:76px;height:13.79px;overflow:hidden"><div class="t" style="left:0;top:2.10px;font-size:10.5px;letter-spacing:-0.55px;transform:scaleX(0.95);transform-origin:0 0;color:#1e1e1e">Name</div></div>
<div class="t" style="left:102.00px;top:98.63px;font-size:10.5px;font-weight:bold;letter-spacing:-0.1px">Slider</div>
<div class="a" style="left:0.00px;top:110.32px;width:211.00px;height:14.29px;background:#d3d3d3"></div>
<svg style="left:4px;top:114.62px" width="10" height="6"><path d="M1.2 0.9 L4.8 4.5 L8.4 0.9" fill="none" stroke="#3c3c3c" stroke-width="1.5"/></svg>
<div class="t" style="left:22.00px;top:112.42px;font-size:10.5px;font-weight:bold;letter-spacing:-0.15px">Location/Size</div>
<div class="a" style="left:0.00px;top:124.11px;width:18.00px;height:14.29px;background:#d3d3d3"></div>
<div class="a" style="left:18.00px;top:136.90px;width:193.00px;height:1.00px;background:#e6e6e6"></div>
<div class="a" style="left:98.00px;top:124.11px;width:1.00px;height:13.79px;background:#e6e6e6"></div>
<div class="a" style="left:21px;top:124.11px;width:76px;height:13.79px;overflow:hidden"><div class="t" style="left:0;top:2.10px;font-size:10.5px;letter-spacing:-0.55px;transform:scaleX(0.95);transform-origin:0 0;color:#1e1e1e">Left</div></div>
<div class="t" style="left:102.00px;top:126.21px;font-size:10.5px;font-weight:bold;letter-spacing:-0.1px">1237</div>
<div class="a" style="left:0.00px;top:137.90px;width:18.00px;height:14.29px;background:#d3d3d3"></div>
<div class="a" style="left:18.00px;top:150.69px;width:193.00px;height:1.00px;background:#e6e6e6"></div>
<div class="a" style="left:98.00px;top:137.90px;width:1.00px;height:13.79px;background:#e6e6e6"></div>
<div class="a" style="left:21px;top:137.90px;width:76px;height:13.79px;overflow:hidden"><div class="t" style="left:0;top:2.10px;font-size:10.5px;letter-spacing:-0.55px;transform:scaleX(0.95);transform-origin:0 0;color:#1e1e1e">Top</div></div>
<div class="t" style="left:102.00px;top:140.00px;font-size:10.5px;font-weight:bold;letter-spacing:-0.1px">338</div>
<div class="a" style="left:0.00px;top:151.69px;width:18.00px;height:14.29px;background:#d3d3d3"></div>
<div class="a" style="left:18.00px;top:164.48px;width:193.00px;height:1.00px;background:#e6e6e6"></div>
<div class="a" style="left:98.00px;top:151.69px;width:1.00px;height:13.79px;background:#e6e6e6"></div>
<div class="a" style="left:21px;top:151.69px;width:76px;height:13.79px;overflow:hidden"><div class="t" style="left:0;top:2.10px;font-size:10.5px;letter-spacing:-0.55px;transform:scaleX(0.95);transform-origin:0 0;color:#1e1e1e">Width</div></div>
<div class="t" style="left:102.00px;top:153.79px;font-size:10.5px;font-weight:bold;letter-spacing:-0.1px">50</div>
<div class="a" style="left:0.00px;top:165.48px;width:18.00px;height:14.29px;background:#d3d3d3"></div>
<div class="a" style="left:18.00px;top:178.27px;width:193.00px;height:1.00px;background:#e6e6e6"></div>
<div class="a" style="left:98.00px;top:165.48px;width:1.00px;height:13.79px;background:#e6e6e6"></div>
<div class="a" style="left:21px;top:165.48px;width:76px;height:13.79px;overflow:hidden"><div class="t" style="left:0;top:2.10px;font-size:10.5px;letter-spacing:-0.55px;transform:scaleX(0.95);transform-origin:0 0;color:#1e1e1e">Height</div></div>
<div class="t" style="left:102.00px;top:167.58px;font-size:10.5px;font-weight:bold;letter-spacing:-0.1px">250</div>
<div class="a" style="left:0.00px;top:179.27px;width:18.00px;height:14.29px;background:#d3d3d3"></div>
<div class="a" style="left:18.00px;top:192.06px;width:193.00px;height:1.00px;background:#e6e6e6"></div>
<div class="a" style="left:98.00px;top:179.27px;width:1.00px;height:13.79px;background:#e6e6e6"></div>
<div class="a" style="left:21px;top:179.27px;width:76px;height:13.79px;overflow:hidden"><div class="t" style="left:0;top:2.10px;font-size:10.5px;letter-spacing:-0.55px;transform:scaleX(0.95);transform-origin:0 0;color:#1e1e1e">ZOrder</div></div>
<div class="t" style="left:102.00px;top:181.37px;font-size:10.5px;font-weight:bold;letter-spacing:-0.1px">Front</div>
<div class="a" style="left:0.00px;top:193.06px;width:18.00px;height:14.29px;background:#d3d3d3"></div>
<div class="a" style="left:18.00px;top:205.85px;width:193.00px;height:1.00px;background:#e6e6e6"></div>
<div class="a" style="left:98.00px;top:193.06px;width:1.00px;height:13.79px;background:#e6e6e6"></div>
<div class="a" style="left:21px;top:193.06px;width:76px;height:13.79px;overflow:hidden"><div class="t" style="left:0;top:2.10px;font-size:10.5px;letter-spacing:-0.55px;transform:scaleX(0.95);transform-origin:0 0;color:#6d6d6d">ZOrderNumber</div></div>
<div class="t" style="left:102.00px;top:195.16px;font-size:10.5px;font-weight:normal;color:#6d6d6d;letter-spacing:-0.4px">1</div>
<div class="a" style="left:0.00px;top:206.85px;width:211.00px;height:14.29px;background:#d3d3d3"></div>
<svg style="left:4px;top:211.15px" width="10" height="6"><path d="M1.2 0.9 L4.8 4.5 L8.4 0.9" fill="none" stroke="#3c3c3c" stroke-width="1.5"/></svg>
<div class="t" style="left:22.00px;top:208.95px;font-size:10.5px;font-weight:bold;letter-spacing:-0.15px">Misc</div>
<div class="a" style="left:0.00px;top:220.64px;width:18.00px;height:14.29px;background:#d3d3d3"></div>
<div class="a" style="left:18.00px;top:233.43px;width:193.00px;height:1.00px;background:#e6e6e6"></div>
<div class="a" style="left:98.00px;top:220.64px;width:1.00px;height:13.79px;background:#e6e6e6"></div>
<div class="a" style="left:21px;top:220.64px;width:76px;height:13.79px;overflow:hidden"><div class="t" style="left:0;top:2.10px;font-size:10.5px;letter-spacing:-0.55px;transform:scaleX(0.95);transform-origin:0 0;color:#6d6d6d">ControlID</div></div>
<div class="t" style="left:102.00px;top:222.74px;font-size:10.5px;font-weight:normal;color:#6d6d6d;letter-spacing:-0.4px">60837,0355893</div>
<div class="a" style="left:0.00px;top:234.43px;width:18.00px;height:14.29px;background:#d3d3d3"></div>
<div class="a" style="left:18.00px;top:247.22px;width:193.00px;height:1.00px;background:#e6e6e6"></div>
<div class="a" style="left:98.00px;top:234.43px;width:1.00px;height:13.79px;background:#e6e6e6"></div>
<div class="a" style="left:21px;top:234.43px;width:76px;height:13.79px;overflow:hidden"><div class="t" style="left:0;top:2.10px;font-size:10.5px;letter-spacing:-0.55px;transform:scaleX(0.95);transform-origin:0 0;color:#6d6d6d">ControlType</div></div>
<div class="t" style="left:102.00px;top:236.53px;font-size:10.5px;font-weight:normal;color:#6d6d6d;letter-spacing:-0.4px">HS_TrackBar</div>
<div class="a" style="left:0.00px;top:248.22px;width:211.00px;height:14.29px;background:#d3d3d3"></div>
<svg style="left:4px;top:252.52px" width="10" height="6"><path d="M1.2 0.9 L4.8 4.5 L8.4 0.9" fill="none" stroke="#3c3c3c" stroke-width="1.5"/></svg>
<div class="t" style="left:22.00px;top:250.32px;font-size:10.5px;font-weight:bold;letter-spacing:-0.15px">Settings</div>
<div class="a" style="left:0.00px;top:262.01px;width:18.00px;height:14.29px;background:#d3d3d3"></div>
<div class="a" style="left:18.00px;top:274.80px;width:193.00px;height:1.00px;background:#e6e6e6"></div>
<div class="a" style="left:98.00px;top:262.01px;width:1.00px;height:13.79px;background:#e6e6e6"></div>
<div class="a" style="left:21px;top:262.01px;width:76px;height:13.79px;overflow:hidden"><div class="t" style="left:0;top:2.10px;font-size:10.5px;letter-spacing:-0.55px;transform:scaleX(0.95);transform-origin:0 0;color:#1e1e1e">OffsetMax</div></div>
<div class="t" style="left:102.00px;top:264.11px;font-size:10.5px;font-weight:bold;letter-spacing:-0.1px">0</div>
<div class="a" style="left:0.00px;top:275.80px;width:18.00px;height:14.29px;background:#d3d3d3"></div>
<div class="a" style="left:18.00px;top:288.59px;width:193.00px;height:1.00px;background:#e6e6e6"></div>
<div class="a" style="left:98.00px;top:275.80px;width:1.00px;height:13.79px;background:#e6e6e6"></div>
<div class="a" style="left:21px;top:275.80px;width:76px;height:13.79px;overflow:hidden"><div class="t" style="left:0;top:2.10px;font-size:10.5px;letter-spacing:-0.55px;transform:scaleX(0.95);transform-origin:0 0;color:#1e1e1e">OffsetMin</div></div>
<div class="t" style="left:102.00px;top:277.90px;font-size:10.5px;font-weight:bold;letter-spacing:-0.1px">0</div>
<div class="a" style="left:0.00px;top:289.59px;width:18.00px;height:14.29px;background:#d3d3d3"></div>
<div class="a" style="left:18.00px;top:302.38px;width:193.00px;height:1.00px;background:#e6e6e6"></div>
<div class="a" style="left:98.00px;top:289.59px;width:1.00px;height:13.79px;background:#e6e6e6"></div>
<div class="a" style="left:21px;top:289.59px;width:76px;height:13.79px;overflow:hidden"><div class="t" style="left:0;top:2.10px;font-size:10.5px;letter-spacing:-0.55px;transform:scaleX(0.95);transform-origin:0 0;color:#1e1e1e">Orientation</div></div>
<div class="t" style="left:102.00px;top:291.69px;font-size:10.5px;font-weight:bold;letter-spacing:-0.1px">Vertical</div>
<div class="a" style="left:0.00px;top:303.38px;width:18.00px;height:14.29px;background:#d3d3d3"></div>
<div class="a" style="left:18.00px;top:316.17px;width:193.00px;height:1.00px;background:#e6e6e6"></div>
<div class="a" style="left:98.00px;top:303.38px;width:1.00px;height:13.79px;background:#e6e6e6"></div>
<div class="a" style="left:21px;top:303.38px;width:76px;height:13.79px;overflow:hidden"><div class="t" style="left:0;top:2.10px;font-size:10.5px;letter-spacing:-0.55px;transform:scaleX(0.95);transform-origin:0 0;color:#1e1e1e">SmallChange</div></div>
<div class="t" style="left:102.00px;top:305.48px;font-size:10.5px;font-weight:bold;letter-spacing:-0.1px">1</div>
<div class="a" style="left:0.00px;top:317.17px;width:18.00px;height:14.29px;background:#d3d3d3"></div>
<div class="a" style="left:18.00px;top:329.96px;width:193.00px;height:1.00px;background:#e6e6e6"></div>
<div class="a" style="left:98.00px;top:317.17px;width:1.00px;height:13.79px;background:#e6e6e6"></div>
<div class="a" style="left:21px;top:317.17px;width:76px;height:13.79px;overflow:hidden"><div class="t" style="left:0;top:2.10px;font-size:10.5px;letter-spacing:-0.55px;transform:scaleX(0.95);transform-origin:0 0;color:#1e1e1e">TickFrequency</div></div>
<div class="t" style="left:102.00px;top:319.27px;font-size:10.5px;font-weight:bold;letter-spacing:-0.1px">5</div>
<div class="a" style="left:0.00px;top:330.96px;width:18.00px;height:14.29px;background:#d3d3d3"></div>
<div class="a" style="left:18.00px;top:343.75px;width:193.00px;height:1.00px;background:#e6e6e6"></div>
<div class="a" style="left:98.00px;top:330.96px;width:1.00px;height:13.79px;background:#e6e6e6"></div>
<div class="a" style="left:21px;top:330.96px;width:76px;height:13.79px;overflow:hidden"><div class="t" style="left:0;top:2.10px;font-size:10.5px;letter-spacing:-0.55px;transform:scaleX(0.95);transform-origin:0 0;color:#1e1e1e">TickStyle</div></div>
<div class="t" style="left:102.00px;top:333.06px;font-size:10.5px;font-weight:bold;letter-spacing:-0.1px">BottomRight</div>
<div class="a" style="left:0.00px;top:344.75px;width:18.00px;height:14.29px;background:#d3d3d3"></div>
<div class="a" style="left:18.00px;top:357.54px;width:193.00px;height:1.00px;background:#e6e6e6"></div>
<div class="a" style="left:98.00px;top:344.75px;width:1.00px;height:13.79px;background:#e6e6e6"></div>
<div class="a" style="left:21px;top:344.75px;width:76px;height:13.79px;overflow:hidden"><div class="t" style="left:0;top:2.10px;font-size:10.5px;letter-spacing:-0.55px;transform:scaleX(0.95);transform-origin:0 0;color:#1e1e1e">TrackRealtime</div></div>
<div class="t" style="left:102.00px;top:346.85px;font-size:10.5px;font-weight:bold;letter-spacing:-0.1px">False</div>
<div class="a" style="left:0.00px;top:358.54px;width:18.00px;height:14.29px;background:#d3d3d3"></div>
<div class="a" style="left:18.00px;top:371.33px;width:193.00px;height:1.00px;background:#e6e6e6"></div>
<div class="a" style="left:98.00px;top:358.54px;width:1.00px;height:13.79px;background:#e6e6e6"></div>
<div class="a" style="left:21px;top:358.54px;width:76px;height:13.79px;overflow:hidden"><div class="t" style="left:0;top:2.10px;font-size:10.5px;letter-spacing:-0.55px;transform:scaleX(0.95);transform-origin:0 0;color:#1e1e1e">ValueInitial</div></div>
<div class="t" style="left:102.00px;top:360.64px;font-size:10.5px;font-weight:bold;letter-spacing:-0.1px">50</div>
<div class="a" style="left:0.00px;top:372.33px;width:18.00px;height:14.29px;background:#d3d3d3"></div>
<div class="a" style="left:18.00px;top:385.12px;width:193.00px;height:1.00px;background:#e6e6e6"></div>
<div class="a" style="left:98.00px;top:372.33px;width:1.00px;height:13.79px;background:#e6e6e6"></div>
<div class="a" style="left:21px;top:372.33px;width:76px;height:13.79px;overflow:hidden"><div class="t" style="left:0;top:2.10px;font-size:10.5px;letter-spacing:-0.55px;transform:scaleX(0.95);transform-origin:0 0;color:#1e1e1e">ValueInvert</div></div>
<div class="t" style="left:102.00px;top:374.43px;font-size:10.5px;font-weight:bold;letter-spacing:-0.1px">False</div>
<div class="a" style="left:0.00px;top:386.12px;width:18.00px;height:14.29px;background:#d3d3d3"></div>
<div class="a" style="left:18.00px;top:398.91px;width:193.00px;height:1.00px;background:#e6e6e6"></div>
<div class="a" style="left:98.00px;top:386.12px;width:1.00px;height:13.79px;background:#e6e6e6"></div>
<div class="a" style="left:21px;top:386.12px;width:76px;height:13.79px;overflow:hidden"><div class="t" style="left:0;top:2.10px;font-size:10.5px;letter-spacing:-0.55px;transform:scaleX(0.95);transform-origin:0 0;color:#1e1e1e">ValueMax</div></div>
<div class="t" style="left:102.00px;top:388.22px;font-size:10.5px;font-weight:bold;letter-spacing:-0.1px">100</div>
<div class="a" style="left:0.00px;top:399.91px;width:18.00px;height:14.29px;background:#d3d3d3"></div>
<div class="a" style="left:18.00px;top:412.70px;width:193.00px;height:1.00px;background:#e6e6e6"></div>
<div class="a" style="left:98.00px;top:399.91px;width:1.00px;height:13.79px;background:#e6e6e6"></div>
<div class="a" style="left:21px;top:399.91px;width:76px;height:13.79px;overflow:hidden"><div class="t" style="left:0;top:2.10px;font-size:10.5px;letter-spacing:-0.55px;transform:scaleX(0.95);transform-origin:0 0;color:#1e1e1e">ValueMin</div></div>
<div class="t" style="left:102.00px;top:402.01px;font-size:10.5px;font-weight:bold;letter-spacing:-0.1px">0</div>
<div class="a" style="left:0.00px;top:413.70px;width:211.00px;height:14.29px;background:#d3d3d3"></div>
<svg style="left:4px;top:418.00px" width="10" height="6"><path d="M1.2 0.9 L4.8 4.5 L8.4 0.9" fill="none" stroke="#3c3c3c" stroke-width="1.5"/></svg>
<div class="t" style="left:22.00px;top:415.80px;font-size:10.5px;font-weight:bold;letter-spacing:-0.15px">Status/Device Associations</div>
<div class="a" style="left:0.00px;top:427.49px;width:18.00px;height:14.29px;background:#d3d3d3"></div>
<div class="a" style="left:18.00px;top:440.28px;width:193.00px;height:1.00px;background:#e6e6e6"></div>
<div class="a" style="left:98.00px;top:427.49px;width:1.00px;height:13.79px;background:#e6e6e6"></div>
<div class="a" style="left:21px;top:427.49px;width:76px;height:13.79px;overflow:hidden"><div class="t" style="left:0;top:2.10px;font-size:10.5px;letter-spacing:-0.55px;transform:scaleX(0.95);transform-origin:0 0;color:#1e1e1e">StatusTracking</div></div>
</div>
<div class="a" style="left:781px;top:655px;width:213px;height:51px;background:#f0f0f0;border:1px solid #a0a0a0"></div>
<div class="t" style="left:787px;top:657.10px;font-size:10.5px;font-weight:bold;letter-spacing:-0.2px">Name</div>
<div class="t" style="left:786.3px;top:671.20px;font-size:10.5px;transform:scaleX(0.96);transform-origin:0 0;letter-spacing:-0.42px;color:#222">A unique name for this control, used for identifying</div>
<div class="t" style="left:786.3px;top:682.10px;font-size:10.5px;transform:scaleX(0.98);transform-origin:0 0;letter-spacing:-0.42px;color:#222">the control in actions.</div>
<div class="a" style="left:0px;top:707px;width:997px;height:1px;background:#dadada"></div>
<div class="a" style="left:0px;top:708px;width:997px;height:19px;background:#f0f0f0"></div>
<div class="a" style="left:0px;top:727px;width:997px;height:1px;background:#a8c8e8"></div>
<div class="t" style="left:3.2px;top:712.44px;font-size:11px;letter-spacing:-0.28px">Deploying project file: C:\Users\</div>
<svg style="left:145px;top:711px" width="32" height="14"><path d="M3 5.8 L15 4.8 Q20 3.3 25 3.4 Q28 4 27.8 8 L25.5 10 L27.8 12 Q25 13.3 20 12.5 L18 11 L3 11 Z" fill="#000"/></svg>
<div class="t" style="left:173.5px;top:712.04px;font-size:11px;letter-spacing:-0.3px">\Documents\My HSTouch Projects\nr1.xml</div>
<div class="t" style="left:550px;top:712.04px;font-size:11px;transform:scaleX(0.93);transform-origin:0 0;letter-spacing:-0.3px">X=1237</div>
<div class="t" style="left:598.4px;top:712.04px;font-size:11px;transform:scaleX(0.93);transform-origin:0 0;letter-spacing:-0.3px">Y=338</div>
<div class="t" style="left:636.7px;top:712.04px;font-size:11px;transform:scaleX(0.93);transform-origin:0 0;letter-spacing:-0.3px">MX=1354</div>
<div class="t" style="left:686px;top:712.04px;font-size:11px;transform:scaleX(0.93);transform-origin:0 0;letter-spacing:-0.3px">MY=637</div>
<div class="a" style="left:993px;top:719px;width:2px;height:2px;background:#a0a0a0"></div>
<div class="a" style="left:990px;top:722px;width:2px;height:2px;background:#a0a0a0"></div>
<div class="a" style="left:993px;top:722px;width:2px;height:2px;background:#a0a0a0"></div>
<div class="a" style="left:987px;top:725px;width:2px;height:2px;background:#a0a0a0"></div>
<div class="a" style="left:990px;top:725px;width:2px;height:2px;background:#a0a0a0"></div>
<div class="a" style="left:993px;top:725px;width:2px;height:2px;background:#a0a0a0"></div>
</body></html>
